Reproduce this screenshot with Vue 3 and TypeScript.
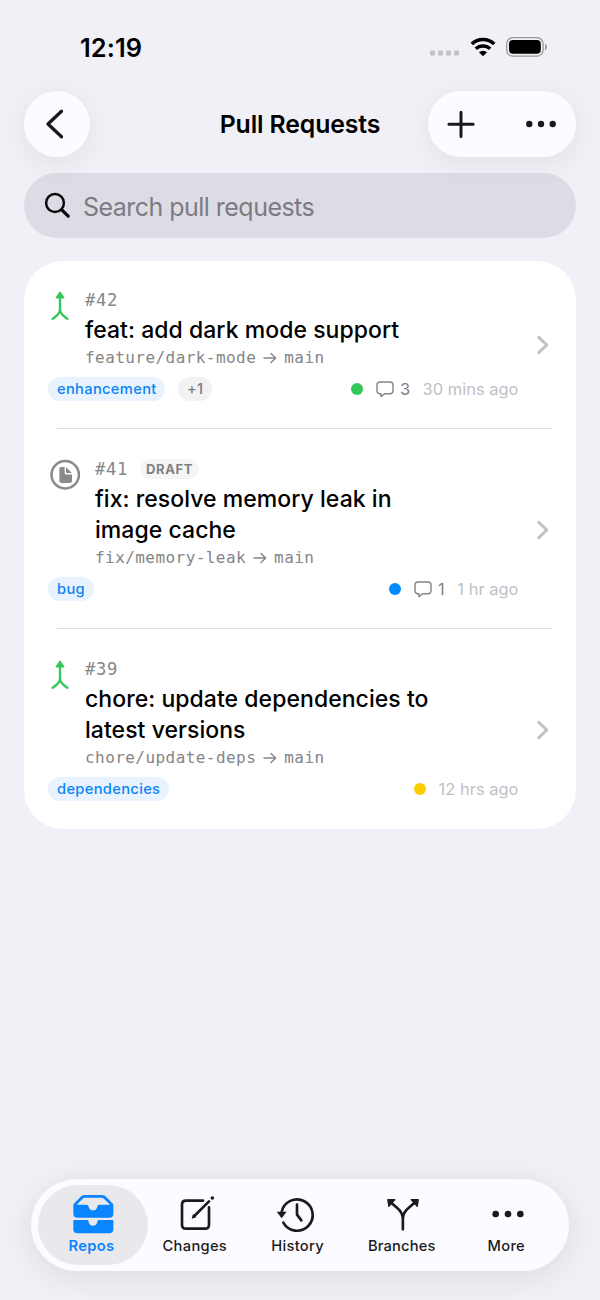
<script setup lang="ts">
interface PullRequest {
  id: number
  draft: boolean
  title: string
  source: string
  target: string
  label: string
  extra: string
  status: string
  comments: number
  age: string
}

interface Tab {
  name: string
  icon: string
}

const pulls: PullRequest[] = [
  { id: 42, draft: false, title: 'feat: add dark mode support', source: 'feature/dark-mode', target: 'main', label: 'enhancement', extra: '+1', status: 'green', comments: 3, age: '30 mins ago' },
  { id: 41, draft: true, title: 'fix: resolve memory leak in image cache', source: 'fix/memory-leak', target: 'main', label: 'bug', extra: '', status: 'blue', comments: 1, age: '1 hr ago' },
  { id: 39, draft: false, title: 'chore: update dependencies to latest versions', source: 'chore/update-deps', target: 'main', label: 'dependencies', extra: '', status: 'yellow', comments: 0, age: '12 hrs ago' },
]

const tabs: Tab[] = [
  { name: 'Repos', icon: 'repos' },
  { name: 'Changes', icon: 'changes' },
  { name: 'History', icon: 'history' },
  { name: 'Branches', icon: 'branches' },
  { name: 'More', icon: 'more' },
]
</script>

<template>
  <div class="screen">
    <header class="status-bar">
      <span class="clock">12:19</span>
      <div class="indicators">
        <svg class="cell" width="30" height="6" viewBox="0 0 30 6">
          <rect v-for="i in 4" :key="i" :x="(i - 1) * 8" y="0.5" width="5" height="5" rx="1" />
        </svg>
        <svg class="wifi" width="26" height="20" viewBox="0 0 26 20">
          <path d="M1.8 7A16 16 0 0 1 24.2 7" />
          <path d="M5.8 11.8A10.4 10.4 0 0 1 20.2 11.8" />
          <path class="solid" d="M13 19.2L8.9 15.3A5.9 5.9 0 0 1 17.1 15.3Z" />
        </svg>
        <svg class="battery" width="42" height="20" viewBox="0 0 42 20">
          <rect class="shell" x="0.7" y="0.7" width="36.4" height="18.4" rx="6" />
          <rect x="3" y="3" width="31.8" height="13.8" rx="4" />
          <path class="nub" d="M39 6.7C41.6 7.6 41.6 12.2 39 13.1Z" />
        </svg>
      </div>
    </header>

    <nav class="nav-bar">
      <button class="glass back" aria-label="Back">
        <svg width="22" height="32" viewBox="0 0 22 32"><path d="M17.5 3.2L4 16L17.5 28.8" /></svg>
      </button>
      <h1>Pull Requests</h1>
      <div class="glass actions">
        <svg width="28" height="28" viewBox="0 0 28 28"><path d="M14 2.2V26.4M1.9 14.3H26.1" /></svg>
        <svg width="30" height="8" viewBox="0 0 30 8"><circle cx="3.3" cy="4" r="3.2" /><circle cx="15" cy="4" r="3.2" /><circle cx="26.7" cy="4" r="3.2" /></svg>
      </div>
    </nav>

    <div class="search">
      <svg width="28" height="28" viewBox="0 0 28 28"><circle cx="11" cy="11" r="8.9" /><path class="handle" d="M17.8 17.8L24.2 24.2" /></svg>
      <span>Search pull requests</span>
    </div>

    <main class="list">
      <article v-for="pr in pulls" :key="pr.id" class="row">
        <div class="content">
          <div class="top">
            <svg v-if="pr.draft" class="draft-icon" width="34" height="34" viewBox="0 0 34 34">
              <circle cx="17.2" cy="17.7" r="13.7" />
              <path d="M11.4 11.7Q11.4 9.9 13.2 9.9H16.6V15.7Q16.6 17.5 18.4 17.5H24V24.1Q24 25.9 22.2 25.9H13.2Q11.4 25.9 11.4 24.1Z" />
              <path d="M18 9.9L23.8 16H18.9Q18 16 18 15.1Z" />
            </svg>
            <svg v-else class="merge-icon" width="24" height="34" viewBox="0 0 24 34">
              <path d="M12 8V22.5M4.6 30.7C8.2 28.2 12 26.2 12 21.5C12 26.2 15.8 28.2 19.4 30.7" />
              <path class="tip" d="M12 4.4L15.6 9.8H8.4Z" />
            </svg>
            <div class="text">
              <div class="ident"><span class="number">#{{ pr.id }}</span><span v-if="pr.draft" class="draft">DRAFT</span></div>
              <h2>{{ pr.title }}</h2>
              <div class="branch">
                {{ pr.source }}<svg width="14" height="12" viewBox="0 0 14 12"><path d="M1 6H12.6M8 1.4L12.7 6L8 10.6" /></svg>{{ pr.target }}
              </div>
            </div>
          </div>
          <footer class="meta">
            <span class="tag">{{ pr.label }}</span>
            <span v-if="pr.extra" class="tag more-tag">{{ pr.extra }}</span>
            <i class="dot" :class="pr.status"></i>
            <span v-if="pr.comments" class="comments">
              <svg width="18" height="17" viewBox="0 0 18 17"><path d="M4 1H14Q17 1 17 4V9.8Q17 12.8 14 12.8H8.6L5 15.6V12.8H4Q1 12.8 1 9.8V4Q1 1 4 1Z" /></svg>
              <span>{{ pr.comments }}</span>
            </span>
            <time>{{ pr.age }}</time>
          </footer>
        </div>
        <svg class="chevron" width="14" height="20" viewBox="0 0 14 20"><path d="M2.8 2.4L10.8 10L2.8 17.6" /></svg>
      </article>
    </main>

    <nav class="tab-bar">
      <a v-for="(tab, i) in tabs" :key="tab.name" class="tab" :class="[tab.icon, { active: i === 0 }]">
        <svg v-if="tab.icon === 'repos'" width="48" height="44" viewBox="147 66 144 132">
          <path class="fill" d="M160 103L182 80Q187 75 194 75H246Q253 75 258 80L280 103V131Q280 143 268 143H172Q160 143 160 131ZM170 104H199Q206 104 206 110Q208 121 219 121Q230 121 232 110Q232 104 239 104H270L252 86Q249 83 245 83H195Q191 83 188 86Z" fill-rule="evenodd" />
          <path class="fill" d="M160 150H202Q206 150 206 155Q208 167 219 167Q230 167 232 155Q232 150 236 150H280V177Q280 190 267 190H173Q160 190 160 177Z" />
        </svg>
        <svg v-else-if="tab.icon === 'changes'" width="48" height="44" viewBox="454 66 144 132">
          <path d="M550 92H499Q487 92 487 104V164Q487 176 499 176H556Q568 176 568 164V112" />
          <path class="pencil" d="M524 138L568 94" />
          <path class="fill" d="M516 146L520 132L530 142Z" />
          <circle class="fill" cx="578" cy="84" r="5.5" />
        </svg>
        <svg v-else-if="tab.icon === 'history'" width="48" height="44" viewBox="763 66 144 132">
          <path d="M786 126A47 47 0 1 1 791 158" />
          <path d="M832 104V134L845 151" />
          <path class="fill" d="M771 125H801L786 145Z" />
        </svg>
        <svg v-else-if="tab.icon === 'branches'" width="48" height="44" viewBox="233.4 66 144 132">
          <path d="M308 178V149Q308 128 292 115L273 98M308 149Q308 128 324 115L343 98" />
          <path class="arrows" d="M263 89H284L266 109ZM354 89H333L351 109Z" />
        </svg>
        <svg v-else width="48" height="44" viewBox="546 66 144 132">
          <circle class="fill" cx="587" cy="132" r="10" /><circle class="fill" cx="624" cy="132" r="10" /><circle class="fill" cx="661" cy="132" r="10" />
        </svg>
        <span>{{ tab.name }}</span>
      </a>
    </nav>
  </div>
</template>

<style>
body { background: #f1f0f6; }
</style>

<style scoped>
* { box-sizing: border-box; }
svg { display: block; flex: none; fill: none; stroke-linecap: round; stroke-linejoin: round; }
.screen {
  width: 600px; height: 1300px; overflow: hidden; display: flex; flex-direction: column;
  padding: 0 24px 29.5px; background: #f1f0f6; color: #000; font-family: Inter, "Liberation Sans", sans-serif;
}
.status-bar { height: 91px; flex: none; padding: 32px 28px 0 56px; display: flex; justify-content: space-between; align-items: flex-start; }
.clock { font-size: 25.4px; font-weight: 600; line-height: 31px; letter-spacing: 0.1px; }
.indicators { display: flex; gap: 10px; padding-top: 5px; }
.cell { margin-top: 13px; fill: #c3c2c8; }
.wifi { stroke: #000; stroke-width: 3.5; stroke-linecap: butt; }
.wifi .solid { fill: #000; stroke: none; }
.battery { fill: #000; }
.battery .shell { fill: none; stroke: #98979c; stroke-width: 1.3; }
.battery .nub { fill: #98979c; }

.nav-bar { height: 65.5px; flex: none; display: flex; justify-content: space-between; align-items: center; }
.glass { background: #fcfbff; border: 0; padding: 0; height: 65.5px; border-radius: 33px; box-shadow: 0 6px 30px rgba(0, 0, 0, 0.065); }
.back { width: 66px; display: grid; place-items: center; }
.back svg { stroke: #1a1a1e; stroke-width: 3.3; margin-right: 5px; }
h1 { margin: 0 0 0 82px; flex: 1; text-align: center; font-size: 24.8px; font-weight: 600; letter-spacing: -0.12px; line-height: 32px; }
.actions { width: 148px; display: flex; align-items: center; justify-content: space-between; padding: 0 20px 0 19px; }
.actions svg { stroke: #1a1a1e; stroke-width: 3; }
.actions svg + svg { fill: #1a1a1e; stroke: none; }

.search { height: 65px; flex: none; margin-top: 16.8px; border-radius: 33px; background: rgba(118, 120, 134, 0.16); display: flex; align-items: center; padding-left: 20px; gap: 11px; }
.search svg { stroke: #09090b; stroke-width: 2.5; }
.search .handle { stroke-width: 3.2; }
.search span { color: #7c7b84; font-size: 25px; line-height: 32px; letter-spacing: -0.53px; padding-top: 2px; }

.list { margin-top: 23px; background: #fff; border-radius: 39px; }
.row { display: flex; align-items: center; padding: 28px 26px 27.5px 24px; position: relative; }
.row:first-child { padding-top: 27px; }
.row + .row::before { content: ''; position: absolute; left: 33px; right: 24px; top: -0.5px; height: 1px; background: #dedee0; }
.content { width: 470.5px; }
.top { display: flex; gap: 13px; }
.merge-icon { stroke: #34c759; stroke-width: 2.4; }
.merge-icon .tip { fill: #34c759; stroke-width: 1.6; }
.draft-icon { fill: #8a8a8c; }
.draft-icon circle { fill: none; stroke: #8a8a8c; stroke-width: 2.5; }
.ident { height: 24px; display: flex; align-items: center; gap: 12px; }
.number { font: 17.2px/24px "DejaVu Sans Mono", monospace; letter-spacing: 0.65px; color: #858587; }
.draft { height: 20px; padding: 0 6px; border-radius: 10px; background: #f5f5f6; color: #808083; font-size: 13px; font-weight: 700; line-height: 20px; letter-spacing: 0.6px; }
h2 { margin: 3px 0 0.5px; width: 350px; font-size: 23px; font-weight: 500; line-height: 31.5px; letter-spacing: 0.05px; }
.branch { height: 22px; display: flex; align-items: center; font: 16px/22px "DejaVu Sans Mono", monospace; letter-spacing: 0.44px; color: #858587; }
.branch svg { margin: 0 7px 0 7px; stroke: #858587; stroke-width: 1.4; }
.meta { height: 24px; margin-top: 8px; display: flex; align-items: center; }
.tag { height: 24px; padding: 0 8.8px 0 9px; border-radius: 12px; background: #e8f3ff; color: #0a84f5; font-size: 14.7px; font-weight: 500; line-height: 25px; letter-spacing: 0.32px; }
.more-tag { margin-left: 12.5px; background: #f2f2f3; color: #7d7d80; }
.dot { width: 12px; height: 12px; border-radius: 50%; margin-left: auto; }
.green { background: #34c759; }
.blue { background: #0088ff; }
.yellow { background: #ffcc00; }
.comments { display: flex; align-items: center; gap: 6px; margin-left: 13px; font-size: 16.4px; color: #808083; }
.comments svg { stroke: #858587; stroke-width: 1.4; }
time { margin-left: 12.5px; color: #c0c0c3; font-size: 16.4px; letter-spacing: 0.05px; }
.chevron { margin-left: auto; stroke: #c2c2c5; stroke-width: 3.1; position: relative; top: 0.7px; }

.tab-bar { margin-top: auto; width: 538px; align-self: center; height: 92px; flex: none; display: flex; padding: 6px 6.5px; border-radius: 46px; background: #fcfbff; box-shadow: 0 6px 34px rgba(0, 0, 0, 0.09); }
.tab { flex: none; display: flex; flex-direction: column; align-items: center; padding-top: 7px; color: #1a1a1e; font-size: 14.7px; font-weight: 500; line-height: 20px; }
.changes { width: 102.6px; }
.history { width: 103px; }
.branches { width: 105.4px; }
.more { width: 103.6px; }
.tab span { letter-spacing: 0.3px; }
.branches span { letter-spacing: 0.15px; }
.tab svg { stroke: currentColor; stroke-width: 8; }
.tab .fill { fill: currentColor; stroke: none; }
.tab .arrows { fill: currentColor; stroke-width: 4; }
.active { width: 110px; margin-right: -4px; height: 80px; border-radius: 40px; background: #e9e9ed; color: #0a84ff; font-weight: 600; }
.active span { margin-left: -2px; }
</style>
